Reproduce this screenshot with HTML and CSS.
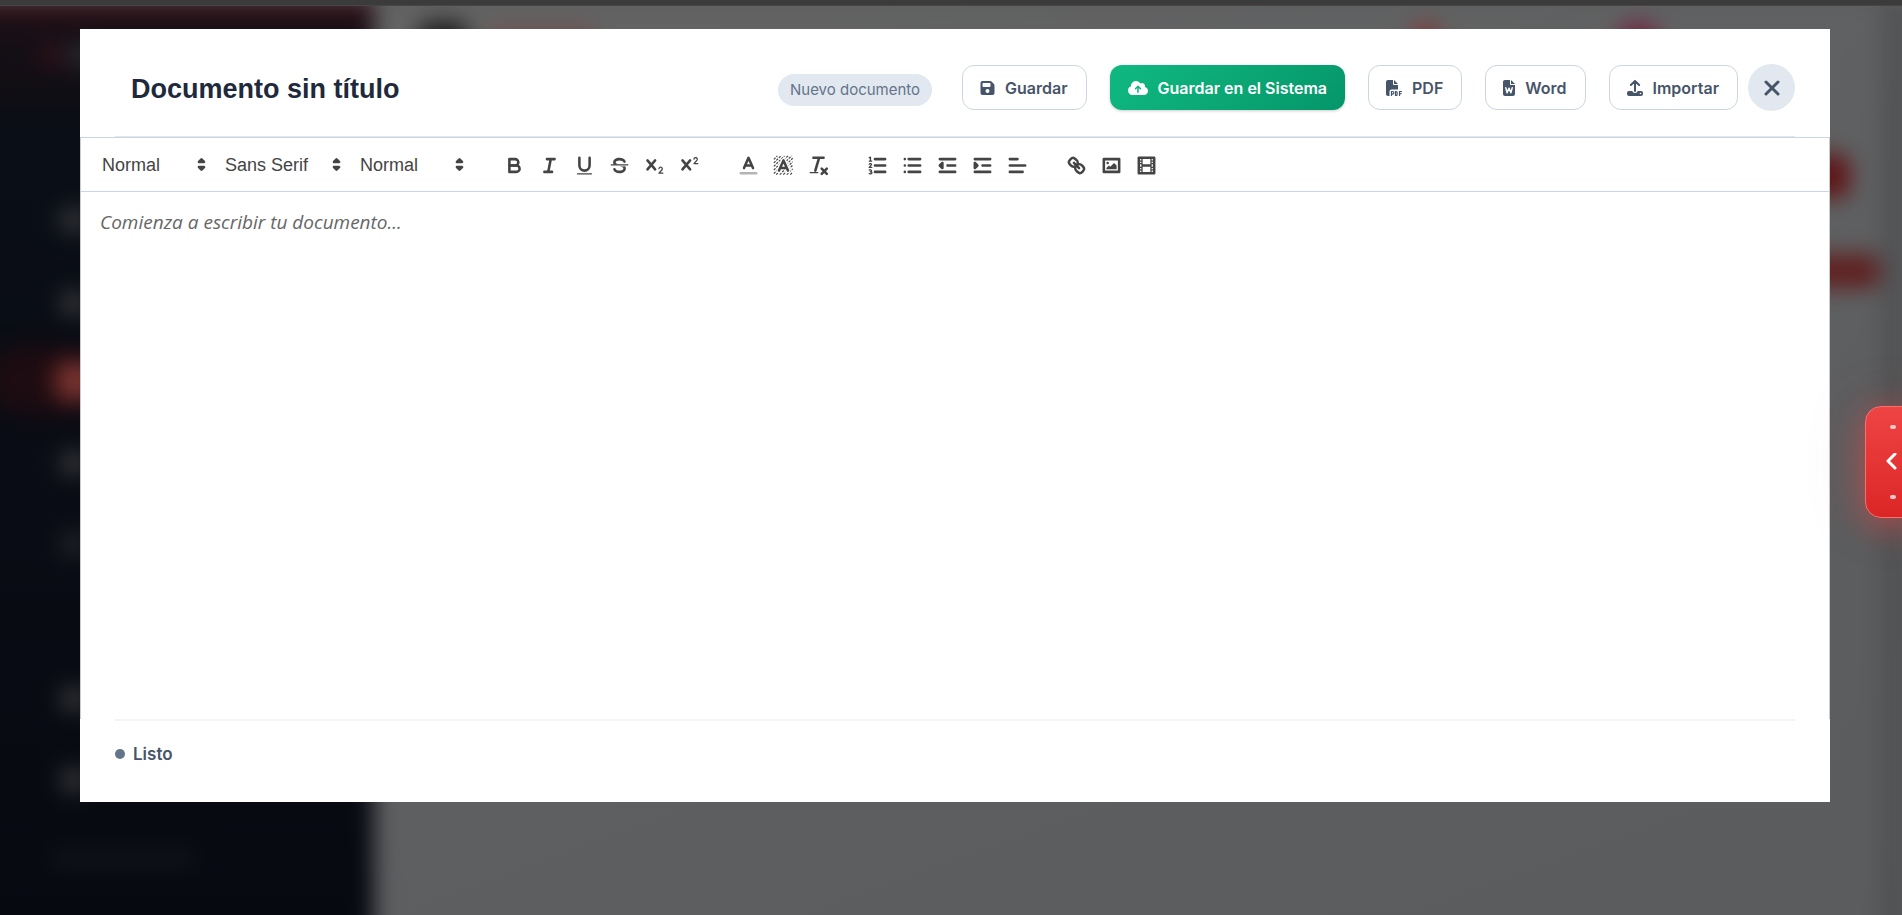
FILE: index.html
```html
<!DOCTYPE html>
<html lang="es">
<head>
  <meta charset="UTF-8">
  <title>Editor de documentos</title>
  <meta name="viewport" content="width=device-width, initial-scale=1">
  <link rel="stylesheet" href="styles.css">
</head>
<body>
  <!-- Página de fondo, desenfocada por el overlay -->
  <div class="backdrop" aria-hidden="true">
    <div class="backdrop-page">
      <div class="side"></div>
      <div class="content"></div>
      <span class="blob logo-a"></span>
      <span class="blob logo-b"></span>
      <span class="blob item i1"></span>
      <span class="blob item i2"></span>
      <span class="blob glow"></span>
      <span class="blob item active"></span>
      <span class="blob item i3"></span>
      <span class="blob item i4"></span>
      <span class="blob item i5"></span>
      <span class="blob item i6"></span>
      <span class="blob caption"></span>
      <span class="blob menu"></span>
      <span class="blob brand"></span>
      <span class="blob alert"></span>
      <span class="blob avatar"></span>
      <span class="blob action"></span>
      <span class="blob tag"></span>
    </div>
    <div class="top-strip"></div>
  </div>

  <div class="modal" role="dialog" aria-label="Editor de documentos">
    <header class="modal-header">
      <input class="doc-title" type="text" value="Documento sin título" aria-label="Título del documento">
      <span class="badge">Nuevo documento</span>
      <div class="actions">
        <button class="btn" type="button">
          <svg width="15" height="16" viewBox="0 0 448 512" fill="currentColor"><path d="M64 32C28.700 32 0 60.700 0 96V416c0 35.300 28.700 64 64 64H384c35.300 0 64-28.700 64-64V173.300c0-17-6.700-33.300-18.700-45.300L352 50.700C340 38.700 323.700 32 306.700 32H64zm0 96c0-17.700 14.300-32 32-32H288c17.700 0 32 14.300 32 32v64c0 17.700-14.300 32-32 32H96c-17.700 0-32-14.300-32-32V128zM224 288a64 64 0 1 1 0 128 64 64 0 1 1 0-128z" fill-rule="evenodd"/></svg>
          Guardar
        </button>
        <button class="btn btn-primary" type="button">
          <svg width="20" height="16" viewBox="0 0 640 512" fill="currentColor"><path fill-rule="evenodd" d="M144 480C64.500 480 0 415.500 0 336c0-62.800 40.200-116.200 96.200-135.900c-.1-2.700-.2-5.400-.2-8.100c0-88.400 71.600-160 160-160c59.300 0 111 32.200 138.700 80.200C409.900 102 428.300 96 448 96c53 0 96 43 96 96c0 12.200-2.300 23.800-6.400 34.600C596 238.400 640 290.100 640 352c0 70.700-57.300 128-128 128H144zm79-217c-9.400 9.400-9.400 24.600 0 33.900s24.600 9.400 33.900 0l39-39V392c0 13.300 10.700 24 24 24s24-10.700 24-24V257.900l39 39c9.400 9.400 24.600 9.400 33.900 0s9.400-24.600 0-33.900l-80-80c-9.400-9.400-24.600-9.400-33.900 0l-80 80z"/></svg>
          Guardar en el Sistema
        </button>
        <button class="btn" type="button">
          <svg width="16" height="16" viewBox="0 0 16 16" fill="currentColor"><path d="M0 2a2 2 0 0 1 2-2h5v4a1 1 0 0 0 1 1h4v4.500H5.500A2 2 0 0 0 3.500 11.500V16H2a2 2 0 0 1-2-2zM8 0l4 4H8z"/><path d="M5.500 16v-4.500h1a1.300 1.300 0 0 1 0 2.600h-1M9.500 11.500h.6a1 1 0 0 1 1 1v2a1 1 0 0 1-1 1h-.6zM13.500 16v-4.500h2.500M13.500 13.700h2" fill="none" stroke="currentColor" stroke-width="1.200"/></svg>
          PDF
        </button>
        <button class="btn" type="button">
          <svg width="12" height="16" viewBox="0 0 384 512" fill="currentColor"><path d="M64 0C28.700 0 0 28.700 0 64v384c0 35.300 28.700 64 64 64h256c35.300 0 64-28.700 64-64V160H256c-17.700 0-32-14.300-32-32V0zM256 0v128h128z"/><path d="M88 250l44 160 60-150 60 150 44-160" fill="none" stroke="#fff" stroke-width="46" stroke-linecap="round" stroke-linejoin="round"/></svg>
          Word
        </button>
        <button class="btn" type="button">
          <svg width="16" height="16" viewBox="0 0 16 16" fill="none" stroke="currentColor"><path d="M3.900 5L8 1l4.100 4M8 1.500V11" stroke-width="2" stroke-linecap="round" stroke-linejoin="round"/><path d="M2 11h3.300a2.800 2.800 0 0 0 5.400 0H14a2 2 0 0 1 2 2v1a2 2 0 0 1-2 2H2a2 2 0 0 1-2-2v-1a2 2 0 0 1 2-2z" fill="currentColor" stroke="none"/><circle cx="13.500" cy="13.500" r=".8" fill="#fff" stroke="none"/></svg>
          Importar
        </button>
      </div>
      <button class="close" type="button" aria-label="Cerrar">
        <svg width="16" height="16" viewBox="0 0 16 16" fill="none" stroke="currentColor" stroke-width="3" stroke-linecap="round"><path d="M2 2l12 12M14 2L2 14"/></svg>
      </button>
    </header>

    <div class="toolbar" role="toolbar" aria-label="Formato">
      <div class="group">
        <span class="picker">
          <select aria-label="Encabezado"><option>Normal</option></select>
          <svg viewBox="0 0 18 18"><polygon class="fill stroked" points="7 11 9 13 11 11 7 11"/><polygon class="fill stroked" points="7 7 9 5 11 7 7 7"/></svg>
        </span>
        <span class="picker wide">
          <select aria-label="Fuente"><option>Sans Serif</option></select>
          <svg viewBox="0 0 18 18"><polygon class="fill stroked" points="7 11 9 13 11 11 7 11"/><polygon class="fill stroked" points="7 7 9 5 11 7 7 7"/></svg>
        </span>
        <span class="picker">
          <select aria-label="Tamaño"><option>Normal</option></select>
          <svg viewBox="0 0 18 18"><polygon class="fill stroked" points="7 11 9 13 11 11 7 11"/><polygon class="fill stroked" points="7 7 9 5 11 7 7 7"/></svg>
        </span>
      </div>
      <div class="group">
        <button type="button" aria-label="Negrita"><svg viewBox="0 0 18 18"><path d="M5,4H9.500A2.500,2.500,0,0,1,12,6.500v0A2.500,2.500,0,0,1,9.500,9H5A0,0,0,0,1,5,9V4A0,0,0,0,1,5,4Z"/><path d="M5,9h5.500A2.500,2.500,0,0,1,13,11.500v0A2.500,2.500,0,0,1,10.500,14H5a0,0,0,0,1,0,0V9A0,0,0,0,1,5,9Z"/></svg></button>
        <button type="button" aria-label="Cursiva"><svg viewBox="0 0 18 18"><path d="M7 4h6M5 14h6M8 14l2-10"/></svg></button>
        <button type="button" aria-label="Subrayado"><svg viewBox="0 0 18 18"><path d="M5,3V9a4.012,4.012,0,0,0,4,4H9a4.012,4.012,0,0,0,4-4V3"/><rect class="fill" height="1" rx=".5" width="12" x="3" y="15"/></svg></button>
        <button type="button" aria-label="Tachado"><svg viewBox="0 0 18 18"><path class="thin" d="M15.500 8.500h-13"/><path class="fill" d="M9.007,8C6.542,7.791,6,7.519,6,6.500,6,5.792,7.283,5,9,5c1.571,0,2.765.679,2.969,1.309a1,1,0,0,0,1.900-.617C13.356,4.106,11.354,3,9,3,6.200,3,4,4.538,4,6.500a3.200,3.200,0,0,0,.5,1.843Z"/><path class="fill" d="M8.984,10C11.457,10.208,12,10.479,12,11.500c0,.708-1.283,1.500-3,1.500-1.571,0-2.765-.679-2.969-1.309a1,1,0,1,0-1.900.617C4.644,13.894,6.646,15,9,15c2.800,0,5-1.538,5-3.500a3.200,3.200,0,0,0-.5-1.843Z"/></svg></button>
        <button type="button" aria-label="Subíndice"><svg viewBox="0 0 18 18"><path d="M3.500 5l6 7M9.500 5l-6 7"/><path class="thin" d="M12.500 11.500a1.300 1.300 0 1 1 2.400.8l-2.400 2.700h3"/></svg></button>
        <button type="button" aria-label="Superíndice"><svg viewBox="0 0 18 18"><path d="M3.500 5l6 7M9.500 5l-6 7"/><path class="thin" d="M12.500 4a1.300 1.300 0 1 1 2.400.8l-2.400 2.700h3"/></svg></button>
      </div>
      <div class="group">
        <button type="button" aria-label="Color"><svg viewBox="0 0 18 18"><path class="faded" d="M3 15h12"/><path d="M5.500 11L9 3l3.500 8M11.630 9H6.380"/></svg></button>
        <button type="button" aria-label="Fondo"><svg viewBox="0 0 18 18"><path class="hatch" d="M.5 3.500L3.500 .5M.5 6.500l6-6M.5 9.500l9-9M.5 12.500l12-12M.5 15.500l15-15M2.500 16.500l14-14M5.500 16.500l11-11M8.500 16.500l8-8M11.500 16.500l5-5M14.500 16.500l2-2" transform="translate(1 1) scale(.92)"/><path class="halo" d="M5.500 13L9 5l3.500 8"/><path d="M5.500 13L9 5l3.500 8M11.630 11H6.380"/></svg></button>
        <button type="button" aria-label="Limpiar formato"><svg viewBox="0 0 18 18"><path d="M5 3h8M6.500 13L9.350 3.500M11.500 11.500l4 4M15.500 11.500l-4 4"/><rect class="fill" height="1" rx=".5" width="7" x="2" y="14"/></svg></button>
      </div>
      <div class="group">
        <button type="button" aria-label="Lista numerada"><svg viewBox="0 0 18 18"><path d="M7 4h8M7 9h8M7 14h8"/><path class="thin" d="M2.500 5.500h2M3.500 5.500v-3l-1 .5M2.500 8c.3-.7 2-.7 1.800.3L2.500 10.500h2M2.500 12.500c2-.5 2.500 1 .8 1.400 2.200 0 1.700 2-.8 1.500"/></svg></button>
        <button type="button" aria-label="Lista"><svg viewBox="0 0 18 18"><path d="M6 4h9M6 9h9M6 14h9M3 4h0M3 9h0M3 14h0"/></svg></button>
        <button type="button" aria-label="Reducir sangría"><svg viewBox="0 0 18 18"><path d="M3 14h12M3 4h12M9 9h6"/><polygon class="fill stroked" points="5 7 5 11 3 9 5 7"/></svg></button>
        <button type="button" aria-label="Aumentar sangría"><svg viewBox="0 0 18 18"><path d="M3 14h12M3 4h12M9 9h6"/><polygon class="fill stroked" points="3 7 3 11 5 9 3 7"/></svg></button>
        <button type="button" aria-label="Alineación"><svg viewBox="0 0 18 18"><path d="M3 9h12M3 14h10M3 4h6"/></svg></button>
      </div>
      <div class="group">
        <button type="button" aria-label="Enlace"><svg viewBox="0 0 18 18"><path d="M7 7l4 4"/><path d="M8.900,4.577a3.476,3.476,0,0,1,.36,4.679A3.476,3.476,0,0,1,4.577,8.900C3.185,7.500,2.035,6.400,4.217,4.217S7.500,3.185,8.900,4.577Z"/><path d="M13.423,9.100a3.476,3.476,0,0,0-4.679-.36,3.476,3.476,0,0,0,.36,4.679c1.392,1.392,2.500,2.542,4.679.36S14.815,10.500,13.423,9.100Z"/></svg></button>
        <button type="button" aria-label="Imagen"><svg viewBox="0 0 18 18"><rect height="10" width="12" x="3" y="4"/><circle class="fill" cx="6" cy="7" r="1"/><polyline class="fill" points="5 12 5 11 7 9 8 10 11 7 13 9 13 12 5 12"/></svg></button>
        <button type="button" aria-label="Video"><svg viewBox="0 0 18 18"><rect height="12" width="12" x="3" y="3"/><path class="fill" d="M5 3h1v12H5zM12 3h1v12h-1zM5 8h8v2H5zM3 5h3v1H3zM3 7h3v1H3zM3 10h3v1H3zM3 12h3v1H3zM12 5h3v1h-3zM12 7h3v1h-3zM12 10h3v1h-3zM12 12h3v1h-3z"/></svg></button>
      </div>
    </div>

    <textarea class="editor" placeholder="Comienza a escribir tu documento..." aria-label="Contenido del documento"></textarea>

    <footer class="modal-footer">
      <span class="dot"></span>
      <span>Listo</span>
    </footer>
  </div>

  <button class="drawer-tab" type="button" aria-label="Abrir panel">
    <span class="grip"></span>
    <svg width="16" height="18" viewBox="0 0 16 18" fill="none" stroke="currentColor" stroke-width="3" stroke-linecap="round" stroke-linejoin="round"><path d="M10 1L3 8l7 7"/></svg>
    <span class="grip"></span>
  </button>
</body>
</html>
```

FILE: styles.css
```css
* { box-sizing: border-box; }
body { margin: 0; min-height: 100vh; overflow: hidden; background: #5c5d5f; font-family: Inter, "Liberation Sans", sans-serif; color: #475569; }
button, input, select, textarea { font: inherit; color: inherit; }

/* Fondo */
.backdrop { position: fixed; inset: 0; overflow: hidden; }
.backdrop-page { position: absolute; inset: 0 0 -40px; display: flex; filter: blur(11px); }
.side { width: 374px; margin-left: -40px; flex-shrink: 0; box-sizing: content-box; padding-left: 40px; background: linear-gradient(180deg, #3d121b 0, #2b0f15 10px, #150f16 32px, #120e14 80px, #0a0e16 130px, #090c14 500px, #070911 100%); }
.content { flex: 1; background: linear-gradient(160deg, #646464 0, #606162 35%, #5b5d5f 75%, #5a5c5e 100%); box-shadow: inset -20px 0 16px -8px #464749; }
.top-strip { position: absolute; top: 0; left: 0; right: 0; height: 6px; background: #3b3b3b; border-bottom: 1px solid #474545; }
.blob { position: absolute; border-radius: 12px; }
.logo-a { left: 40px; top: 44px; width: 20px; height: 22px; background: #3a1118; }
.logo-b { left: 66px; top: 44px; width: 30px; height: 22px; background: #2c2c32; }
.item { left: 60px; width: 28px; height: 24px; background: #38393b; }
.i1 { top: 208px; }
.i2 { top: 291px; }
.glow { left: -10px; top: 350px; width: 100px; height: 60px; border-radius: 30px; background: #1d0c11; box-shadow: 0 0 24px #1d0c11; }
.active { left: 56px; top: 362px; width: 40px; height: 38px; background: #7a3431; box-shadow: 0 0 16px #4a1114; }
.i3 { top: 451px; }
.i4 { top: 532px; background: #22252a; }
.i5 { top: 687px; }
.i6 { top: 768px; }
.caption { left: 50px; top: 852px; width: 145px; height: 14px; background: #13161d; }
.menu { left: 418px; top: 22px; width: 50px; height: 40px; background: #1b1b1b; }
.brand { left: 486px; top: 28px; width: 110px; height: 20px; background: #704c4c; }
.alert { left: 1412px; top: 24px; width: 28px; height: 30px; background: #853636; }
.avatar { left: 1618px; top: 24px; width: 40px; height: 40px; background: #74203d; }
.action { left: 1780px; top: 154px; width: 70px; height: 44px; background: #5f1517; }
.tag { left: 1760px; top: 254px; width: 120px; height: 34px; background: #5f2020; }

/* Modal */
.modal { position: relative; display: flex; flex-direction: column; height: calc(100vh - 142px); margin: 29px 72px 0 80px; background: #fff; }
.modal-header { display: flex; align-items: center; margin: 0 35px; padding: 35px 0 25px; border-bottom: 1px solid #e2e8f0; }
.doc-title { flex: 1; min-width: 0; padding: 8px 16px 4px; border: 0; outline: 0; background: none; font: bold 27px "Liberation Sans", Arial, sans-serif; color: #1e293b; }
.badge { margin: 4px 30px 0 0; padding: 0 12px; border-radius: 16px; background: #e2e8f0; color: #64748b; font-size: 15px; line-height: 32px; white-space: nowrap; }
.actions { display: flex; gap: 23px; margin-right: 10px; }
.btn { display: flex; align-items: center; gap: 10px; height: 45px; padding: 0 18px 0 17px; border: 1px solid #cbd5e1; border-radius: 12px; background: #fff; font-size: 16px; font-weight: 600; white-space: nowrap; cursor: pointer; }
.btn-primary { padding: 0 18px; border: 0; background: linear-gradient(135deg, #10b981, #059669); color: #fff; box-shadow: 0 1px 3px #0003; }
.close { display: flex; align-items: center; justify-content: center; width: 47px; height: 47px; padding: 0; border: 0; border-radius: 50%; background: #e2e8f0; cursor: pointer; }

/* Barra de formato */
.toolbar { display: flex; gap: 24px; padding: 12px 10px 11px 11px; border: 1px solid #cbd5e1; border-right-color: #ccc; border-left-color: #ccc; color: #444; }
.group { display: flex; }
.toolbar svg { display: block; width: 23px; height: 23px; fill: none; stroke: #444; stroke-width: 2; stroke-linecap: round; stroke-linejoin: round; }
.toolbar .fill { fill: #444; stroke: none; }
.toolbar .stroked { stroke: #444; }
.toolbar .thin { stroke-width: 1; }
.toolbar .faded { opacity: .4; }
.toolbar .hatch { stroke-width: 1; stroke-dasharray: 2 1; stroke-linecap: butt; }
.toolbar .halo { stroke: #fff; stroke-width: 4; }
.toolbar button { display: flex; align-items: center; justify-content: center; width: 35px; height: 30px; padding: 0; border: 0; background: none; cursor: pointer; }
.picker { position: relative; width: 123px; }
.picker.wide { width: 135px; }
.picker select { width: 100%; height: 30px; padding: 0 10px; border: 0; background: none; appearance: none; font: 18px "Liberation Sans", Arial, sans-serif; }
.picker svg { position: absolute; top: 3px; right: 2px; pointer-events: none; }

.editor { flex: 1; display: block; width: 100%; padding: 15px 19px; border: 1px solid #ccc; border-top: 0; border-bottom: 0; outline: 0; resize: none; background: #fff; font: 19px/30px "Open Sans", sans-serif; color: #222; }
.editor::placeholder { color: #666; font-style: italic; opacity: 1; }
.modal-footer { display: flex; align-items: center; gap: 8px; margin: 0 35px; padding: 22px 0 37px; border-top: 2px solid #f1f5f9; font-size: 17px; font-weight: 600; line-height: 22px; }
.dot { width: 10px; height: 10px; border-radius: 50%; background: #64748b; }

/* Pestaña lateral */
.drawer-tab { position: fixed; top: 406px; right: -18px; display: flex; flex-direction: column; align-items: center; justify-content: space-between; width: 55px; height: 112px; padding: 18px 0; border: 1px solid #f87171; border-radius: 16px; background: linear-gradient(180deg, #ef4444, #dc2626); color: #fff; box-shadow: 0 8px 32px #ef444480, 0 0 60px #ef444430; cursor: pointer; }
.grip { width: 6px; height: 4px; border-radius: 2px; background: #f9c9c9; }
```
